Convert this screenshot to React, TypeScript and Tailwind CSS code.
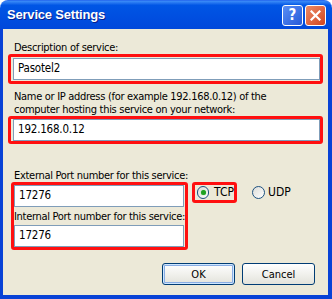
import React from "react";

function Radio({ checked }: { checked?: boolean }) {
  return (
    <div className="w-[13px] h-[13px] rounded-full border border-[#1C5180] bg-gradient-to-br from-[#DCDCD7] to-[#FFFFFF] flex items-center justify-center">
      {checked && <div className="w-[5px] h-[5px] rounded-full bg-[#21A121] shadow-[0_0_1px_#5BD85B]" />}
    </div>
  );
}

function XPInput({ value, w }: { value: string; w: string }) {
  return (
    <div className={`${w} h-[22px] bg-white border border-[#7F9DB9] flex items-center pl-[4px] text-[11.5px] tracking-[-0.2px] text-black leading-none`}>
      {value}
    </div>
  );
}

export default function App() {
  return (
    <div className="w-[332px] h-[299px] flex flex-col bg-white font-['DejaVu_Sans_Condensed','Liberation_Sans',Arial,sans-serif] text-black">
      {/* Title bar */}
      <div className="h-[29px] rounded-t-[8px] bg-gradient-to-b from-[#3C8CF8] via-[#0055E5] via-[15%] to-[#0048DB] flex items-center pl-[7px] pr-[6px] border-t border-[#2A6FF0]">
        <span className="text-white font-bold text-[13px] tracking-[-0.2px] font-['Liberation_Sans',Arial,sans-serif] [text-shadow:1px_1px_0_#0A1E8A]">
          Service Settings
        </span>
        <div className="ml-auto flex gap-[2px]">
          <div className="w-[21px] h-[21px] rounded-[3px] border border-white bg-gradient-to-br from-[#5A8EF5] to-[#2559D8] flex items-center justify-center text-white font-bold text-[15px] leading-none">
            ?
          </div>
          <div className="w-[21px] h-[21px] rounded-[3px] border border-white bg-gradient-to-br from-[#EB8A66] to-[#D2431B] flex items-center justify-center">
            <svg width="11" height="11" viewBox="0 0 11 11">
              <path d="M1.5 1.5 L9.5 9.5 M9.5 1.5 L1.5 9.5" stroke="white" strokeWidth="2.2" strokeLinecap="square" />
            </svg>
          </div>
        </div>
      </div>
      {/* Body */}
      <div className="flex-1 bg-[#ECE9D8] border-l-[3px] border-r-[4px] border-b-[4px] border-[#0842D6] flex flex-col pl-[5px] pt-[12px] text-[11px] leading-[13px] tracking-[-0.3px]">
        <div className="pl-[6px] h-[13px]">Description of service:</div>
        <div className="w-[315px] h-[30px] border-[3px] border-[#FF1010] rounded-[3px] py-[1px] pl-[2px]">
          <XPInput value="Pasotel2" w="w-[307px]" />
        </div>
        <div className="pl-[6px] mt-[6px]">
          Name or IP address (for example 192.168.0.12) of the
          <br />
          computer hosting this service on your network:
        </div>
        <div className="w-[315px] h-[28px] border-[3px] border-[#FF1010] rounded-[3px] pl-[2px]">
          <XPInput value="192.168.0.12" w="w-[307px]" />
        </div>
        <div className="pl-[6px] mt-[25px] h-[13px] whitespace-nowrap">External Port number for this service:</div>
        <div className="flex items-start">
          <div className="ml-[3px] w-[177px] h-[68px] border-[3px] border-[#FF1010] rounded-[3px] flex flex-col">
            <XPInput value="17276" w="w-[170px]" />
            <div className="h-[19px] pt-[3px] whitespace-nowrap">Internal Port number for this service:</div>
            <XPInput value="17276" w="w-[170px]" />
          </div>
          <div className="ml-[4px] w-[45px] h-[21px] border-[3px] border-[#FF1010] rounded-[3px] flex items-center pl-[2px] gap-[5px] tracking-normal">
            <Radio checked />
            <span className="text-[12px]">TCP</span>
          </div>
          <div className="ml-[15px] h-[21px] flex items-center gap-[3px] tracking-normal">
            <Radio />
            <span className="text-[12px]">UDP</span>
          </div>
        </div>
        <div className="mt-[13px] flex pl-[154px] gap-[7px] tracking-normal">
          <div className="w-[73px] h-[22px] rounded-[3px] border border-[#003C74] bg-gradient-to-b from-[#FFFFFF] to-[#E3E3DB] shadow-[inset_0_0_0_1px_#CEE7FF,inset_0_0_0_2px_#89ADE4] flex items-center justify-center">
            OK
          </div>
          <div className="w-[73px] h-[22px] rounded-[3px] border border-[#003C74] bg-gradient-to-b from-[#FFFFFF] to-[#E3E3DB] flex items-center justify-center">
            Cancel
          </div>
        </div>
      </div>
    </div>
  );
}
